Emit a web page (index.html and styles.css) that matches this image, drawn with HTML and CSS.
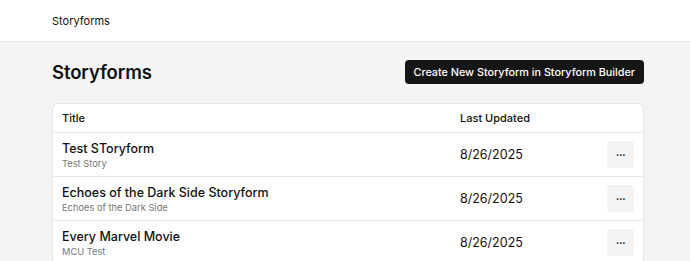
FILE: index.html
```html
<!DOCTYPE html>
<html>
<head>
  <meta name="viewport" content="width=device-width">
  <title>Storyforms</title>
  <link rel="stylesheet" href="styles.css">
</head>
<body>
  <nav class="topbar">
    <a class="brand" href="#">Storyforms</a>
  </nav>
  <main class="page">
    <div class="page_head">
      <h1 class="page_title">Storyforms</h1>
      <button class="primary">Create New Storyform in Storyform Builder</button>
    </div>
    <div class="card">
      <div class="row head">
        <span>Title</span>
        <span>Last Updated</span>
        <span></span>
      </div>
      <div class="row">
        <div>
          <div class="name">Test SToryform</div>
          <div class="sub">Test Story</div>
        </div>
        <div class="date">8/26/2025</div>
        <button class="more">&middot;&middot;&middot;</button>
      </div>
      <div class="row">
        <div>
          <div class="name">Echoes of the Dark Side Storyform</div>
          <div class="sub">Echoes of the Dark Side</div>
        </div>
        <div class="date">8/26/2025</div>
        <button class="more">&middot;&middot;&middot;</button>
      </div>
      <div class="row">
        <div>
          <div class="name">Every Marvel Movie</div>
          <div class="sub">MCU Test</div>
        </div>
        <div class="date">8/26/2025</div>
        <button class="more">&middot;&middot;&middot;</button>
      </div>
    </div>
  </main>
</body>
</html>
```

FILE: styles.css
```css
*, *:before, *:after {
  box-sizing: border-box;
}
html, body {
  height: 100%;
}
body {
  margin: 0;
  padding: 0;
  background: #f4f4f4;
  color: #111;
  font-family: Inter, "Noto Sans", sans-serif;
}

.topbar {
  height: 42px;
  background: #fff;
  border-bottom: 1px solid #e3e3e3;
  display: flex;
  align-items: center;
  padding: 0 46px 0 52px;
}
.brand {
  font-size: 11px;
  color: #111;
  text-decoration: none;
}

.page {
  padding: 18px 46px 0 52px;
}
.page_head {
  display: flex;
  align-items: center;
  justify-content: space-between;
  height: 24px;
  margin-bottom: 19px;
}
.page_title {
  margin: 0;
  font-size: 18.5px;
  font-weight: 600;
  letter-spacing: -0.1px;
}
.primary {
  height: 24px;
  padding: 0 9px;
  border: none;
  border-radius: 4px;
  background: #161616;
  color: #fff;
  font-family: inherit;
  font-size: 10.8px;
  font-weight: 500;
}

.card {
  background: #fff;
  border: 1px solid #e5e5e5;
  border-radius: 6px;
  overflow: hidden;
}
.row {
  display: grid;
  grid-template-columns: 1fr 147px 27px;
  align-items: center;
  padding: 0 9px;
  height: 44px;
  border-top: 1px solid #e5e5e5;
}
.row.head {
  height: 28px;
  border-top: none;
  font-size: 11px;
  font-weight: 500;
}
.name {
  font-size: 12.5px;
  font-weight: 500;
  line-height: 17px;
}
.sub {
  font-size: 9.3px;
  color: #777;
  line-height: 13px;
}
.date {
  font-size: 12.5px;
}
.more {
  width: 27px;
  height: 27px;
  padding: 0;
  border: none;
  border-radius: 4px;
  background: #f3f3f3;
  color: #222;
  font-family: inherit;
  font-size: 11px;
  font-weight: 700;
  letter-spacing: -0.5px;
}
```
